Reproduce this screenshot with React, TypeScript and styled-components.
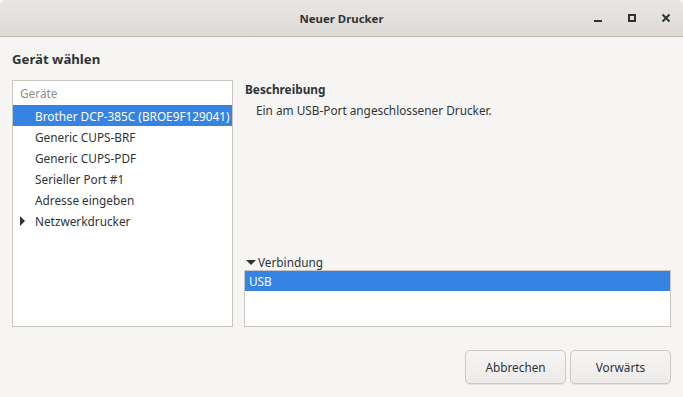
import styled, { createGlobalStyle } from "styled-components";

const GlobalStyle = createGlobalStyle`
  html, body {
    margin: 0;
    padding: 0;
    background: #f6f5f4;
  }
  body {
    font-family: "Noto Sans", "DejaVu Sans", sans-serif;
    font-size: 11.8px;
    color: #2e3436;
  }
`;

const Window = styled.div`
  width: 683px;
  height: 397px;
  display: flex;
  flex-direction: column;
  background: #f6f5f4;
  overflow: hidden;
`;

const TitleBar = styled.div`
  height: 36px;
  flex-shrink: 0;
  display: flex;
  align-items: center;
  justify-content: center;
  position: relative;
  background: linear-gradient(#e8e6e3, #dedbd7);
  border-bottom: 1px solid #bfb8b1;
  border-radius: 6px 6px 0 0;
`;

const Title = styled.span`
  font-weight: bold;
  font-size: 11.4px;
  color: #2e3436;
`;

const Controls = styled.div`
  position: absolute;
  right: 10px;
  top: 0;
  height: 100%;
  display: flex;
  align-items: center;
  gap: 20px;
`;

const ControlIcon = styled.svg`
  width: 14px;
  height: 14px;
  display: block;
`;

const Body = styled.div`
  flex: 1;
  display: flex;
  flex-direction: column;
  padding: 13px 12px 12px 12px;
`;

const Heading = styled.h1`
  margin: 0 0 12px 0;
  font-size: 13.2px;
  font-weight: bold;
  line-height: 18px;
`;

const Main = styled.div`
  display: flex;
  gap: 11px;
  height: 247px;
`;

const Tree = styled.div`
  width: 219px;
  background: #fff;
  border: 1px solid #c9c5bf;
  display: flex;
  flex-direction: column;
`;

const TreeHeader = styled.div`
  height: 24px;
  padding-left: 7px;
  display: flex;
  align-items: center;
  color: #8b8e8f;
`;

const TreeRow = styled.div<{ $selected?: boolean }>`
  height: 21px;
  display: flex;
  align-items: center;
  padding-left: 22px;
  white-space: nowrap;
  overflow: hidden;
  position: relative;
  background: ${(p) => (p.$selected ? "#3584e4" : "transparent")};
  color: ${(p) => (p.$selected ? "#fff" : "#2e3436")};
`;

const Expander = styled.span`
  position: absolute;
  left: 7px;
  top: 6px;
  width: 0;
  height: 0;
  border-top: 5px solid transparent;
  border-bottom: 5px solid transparent;
  border-left: 5px solid #2e3436;
`;

const Details = styled.div`
  flex: 1;
  display: flex;
  flex-direction: column;
`;

const Label = styled.div`
  font-weight: bold;
  line-height: 18px;
  padding-left: 1px;
`;

const Description = styled.div`
  padding-left: 12px;
  margin-top: 3px;
  line-height: 18px;
`;

const Spacer = styled.div`
  flex: 1;
`;

const Toggle = styled.div`
  display: flex;
  align-items: center;
  gap: 2px;
  line-height: 16px;
  padding-left: 2px;
`;

const DownArrow = styled.span`
  width: 0;
  height: 0;
  border-left: 5px solid transparent;
  border-right: 5px solid transparent;
  border-top: 5px solid #2e3436;
`;

const ConnList = styled.div`
  height: 55px;
  background: #fff;
  border: 1px solid #c9c5bf;
`;

const ConnRow = styled.div<{ $selected?: boolean }>`
  height: 20px;
  display: flex;
  align-items: center;
  padding-left: 4px;
  background: ${(p) => (p.$selected ? "#3584e4" : "transparent")};
  color: ${(p) => (p.$selected ? "#fff" : "#2e3436")};
`;

const Buttons = styled.div`
  margin-top: auto;
  display: flex;
  justify-content: flex-end;
  gap: 4px;
  padding-bottom: 1px;
`;

const Button = styled.button`
  width: 101px;
  height: 34px;
  font: inherit;
  color: #2e3436;
  border: 1px solid #cdc7c2;
  border-radius: 5px;
  background: linear-gradient(#f6f5f4, #edebe9);
  box-shadow: 0 1px 0 rgba(0, 0, 0, 0.07);
  cursor: pointer;
`;

export default function App() {
  return (
    <>
      <GlobalStyle />
      <Window>
        <TitleBar>
          <Title>Neuer Drucker</Title>
          <Controls>
            <ControlIcon viewBox="0 0 14 14">
              <rect x="3" y="9" width="8" height="2" fill="#2e3436" />
            </ControlIcon>
            <ControlIcon viewBox="0 0 14 14">
              <rect x="4" y="4" width="6" height="6" fill="none" stroke="#2e3436" strokeWidth="2" />
            </ControlIcon>
            <ControlIcon viewBox="0 0 14 14">
              <path d="M3.5 3.5 L10.5 10.5 M10.5 3.5 L3.5 10.5" stroke="#2e3436" strokeWidth="2" />
            </ControlIcon>
          </Controls>
        </TitleBar>
        <Body>
          <Heading>Gerät wählen</Heading>
          <Main>
            <Tree>
              <TreeHeader>Geräte</TreeHeader>
              <TreeRow $selected>Brother DCP-385C (BROE9F129041)</TreeRow>
              <TreeRow>Generic CUPS-BRF</TreeRow>
              <TreeRow>Generic CUPS-PDF</TreeRow>
              <TreeRow>Serieller Port #1</TreeRow>
              <TreeRow>Adresse eingeben</TreeRow>
              <TreeRow>
                <Expander />
                Netzwerkdrucker
              </TreeRow>
            </Tree>
            <Details>
              <Label>Beschreibung</Label>
              <Description>Ein am USB-Port angeschlossener Drucker.</Description>
              <Spacer />
              <Toggle>
                <DownArrow />
                Verbindung
              </Toggle>
              <ConnList>
                <ConnRow $selected>USB</ConnRow>
              </ConnList>
            </Details>
          </Main>
          <Buttons>
            <Button>Abbrechen</Button>
            <Button>Vorwärts</Button>
          </Buttons>
        </Body>
      </Window>
    </>
  );
}
